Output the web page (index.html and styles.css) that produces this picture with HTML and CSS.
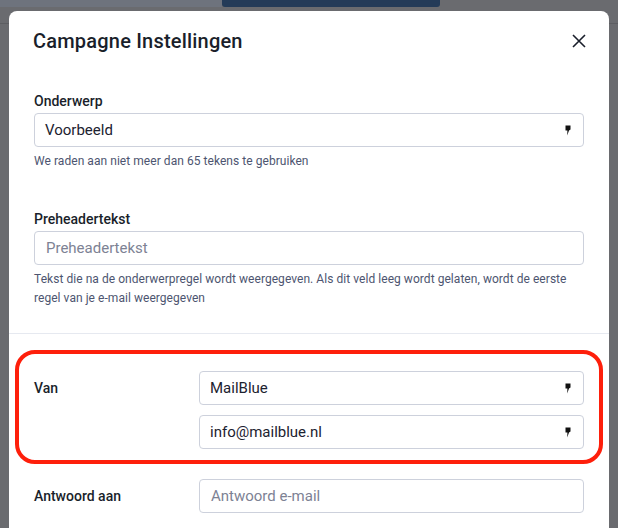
FILE: index.html
```html
<!DOCTYPE html>
<html lang="nl">
<head>
<meta charset="utf-8">
<title>Campagne Instellingen</title>
<link rel="stylesheet" href="styles.css">
</head>
<body>
<div class="backdrop">
  <div class="topbar">
    <div class="topbar-left"></div>
    <div class="topbar-tab"></div>
    <div class="topbar-right"></div>
  </div>
  <div class="backline"></div>
</div>

<div class="modal">
  <div class="modal-header">
    <h2 class="modal-title">Campagne Instellingen</h2>
    <button class="close-btn" aria-label="Sluiten">
      <svg width="14" height="14" viewBox="0 0 14 14"><path d="M1 1 L13 13 M13 1 L1 13" stroke="#1a1f2b" stroke-width="1.6" fill="none"/></svg>
    </button>
  </div>

  <div class="section">
    <div class="field">
      <label class="label">Onderwerp</label>
      <div class="input">
        <span class="value">Voorbeeld</span>
        <svg class="sel-icon" width="6" height="11" viewBox="0 0 6 11"><path d="M0.5 0.5 H5.5 V4.5 L4 5.5 L2.2 10.5 L2.4 5.5 H0.5 Z" fill="#111"/></svg>
      </div>
      <p class="help">We raden aan niet meer dan 65 tekens te gebruiken</p>
    </div>

    <div class="field field-2">
      <label class="label">Preheadertekst</label>
      <div class="input">
        <span class="placeholder">Preheadertekst</span>
      </div>
      <p class="help help-long">Tekst die na de onderwerpregel wordt weergegeven. Als dit veld leeg wordt gelaten, wordt de eerste regel van je e-mail weergegeven</p>
    </div>
  </div>

  <div class="section section-grid">
    <div class="row row-van">
      <div class="row-label">Van</div>
      <div class="row-inputs">
        <div class="input">
          <span class="value">MailBlue</span>
          <svg class="sel-icon" width="6" height="11" viewBox="0 0 6 11"><path d="M0.5 0.5 H5.5 V4.5 L4 5.5 L2.2 10.5 L2.4 5.5 H0.5 Z" fill="#111"/></svg>
        </div>
        <div class="input">
          <span class="value">info@mailblue.nl</span>
          <svg class="sel-icon" width="6" height="11" viewBox="0 0 6 11"><path d="M0.5 0.5 H5.5 V4.5 L4 5.5 L2.2 10.5 L2.4 5.5 H0.5 Z" fill="#111"/></svg>
        </div>
      </div>
      <div class="highlight"></div>
    </div>

    <div class="row row-reply">
      <div class="row-label">Antwoord aan</div>
      <div class="row-inputs">
        <div class="input">
          <span class="placeholder">Antwoord e-mail</span>
        </div>
      </div>
    </div>
  </div>
</div>
</body>
</html>
```

FILE: styles.css
```css
* { box-sizing: border-box; }

html, body {
  margin: 0;
  padding: 0;
}

body {
  width: 618px;
  height: 528px;
  overflow: hidden;
  background: #6a6b6f;
  font-family: Roboto, "Liberation Sans", Arial, sans-serif;
  position: relative;
}

.backdrop {
  width: 100%;
}

.topbar {
  display: flex;
  height: 7px;
}

.topbar-left {
  width: 222px;
  background: #6e737d;
}

.topbar-tab {
  width: 218px;
  background: #243b58;
  border-radius: 0 0 3px 3px;
}

.topbar-right {
  flex: 1;
  background: #6a6b6f;
}

.backline {
  margin-top: 16px;
  height: 1px;
  background: #5d5e62;
}

.modal {
  position: absolute;
  top: 11px;
  left: 9px;
  width: 600px;
  height: 540px;
  background: #ffffff;
  border-radius: 8px 8px 0 0;
  color: #1c2230;
}

.modal-header {
  height: 60px;
  padding: 0 22px 0 24px;
  display: flex;
  align-items: center;
  justify-content: space-between;
}

.modal-title {
  margin: 0;
  font-size: 20px;
  font-weight: 500;
  color: #1a1f2b;
  letter-spacing: 0.2px;
}

.close-btn {
  border: 0;
  background: none;
  padding: 0;
  width: 16px;
  height: 16px;
  display: flex;
  align-items: center;
  justify-content: center;
  margin-top: -1px;
}

.section {
  padding: 20px 25px 25px 25px;
  border-bottom: 1px solid #e6e9f0;
}

.field {
  display: flex;
  flex-direction: column;
}

.field-2 {
  margin-top: 38px;
}

.label {
  font-size: 14px;
  line-height: 20px;
  font-weight: 500;
  color: #1a1f2b;
  margin-bottom: 2px;
}

.input {
  height: 34px;
  border: 1px solid #cdd1dc;
  border-radius: 4px;
  display: flex;
  align-items: center;
  justify-content: space-between;
  padding: 0 10px 0 10px;
  font-size: 15px;
  background: #fff;
}

.value {
  color: #1c2230;
}

.placeholder {
  color: #7d8294;
  padding-left: 1px;
}

.sel-icon {
  display: block;
  margin-right: 2px;
}

.help {
  margin: 5px 0 0 0;
  font-size: 12px;
  line-height: 19px;
  color: #4d5570;
  letter-spacing: 0.05px;
}

.help-long {
  margin-top: 5px;
}

.section-grid {
  border-bottom: 0;
  padding-top: 37px;
}

.row {
  display: grid;
  grid-template-columns: 165px 1fr;
  align-items: start;
  position: relative;
}

.row-label {
  font-size: 14px;
  font-weight: 500;
  line-height: 34px;
  color: #1a1f2b;
}

.row-inputs {
  display: flex;
  flex-direction: column;
  gap: 10px;
}

.row-reply {
  margin-top: 30px;
}

.highlight {
  position: absolute;
  left: -19px;
  right: -19px;
  top: -21px;
  bottom: -15px;
  border: 4px solid #fe1f0b;
  border-radius: 20px;
  pointer-events: none;
}
```
